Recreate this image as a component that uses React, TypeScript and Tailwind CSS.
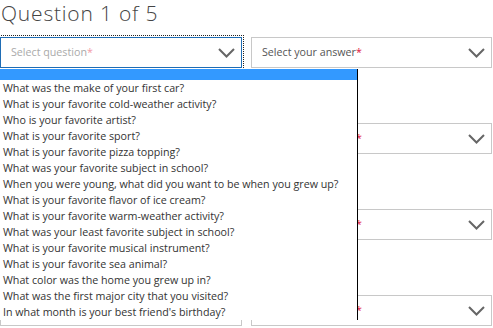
const questions = [
  "What was the make of your first car?",
  "What is your favorite cold-weather activity?",
  "Who is your favorite artist?",
  "What is your favorite sport?",
  "What is your favorite pizza topping?",
  "What was your favorite subject in school?",
  "When you were young, what did you want to be when you grew up?",
  "What is your favorite flavor of ice cream?",
  "What is your favorite warm-weather activity?",
  "What was your least favorite subject in school?",
  "What is your favorite musical instrument?",
  "What is your favorite sea animal?",
  "What color was the home you grew up in?",
  "What was the first major city that you visited?",
  "In what month is your best friend's birthday?",
];

function Chevron() {
  return (
    <svg
      className="absolute right-[6px] top-1/2 -translate-y-1/2"
      width="17"
      height="10"
      viewBox="0 0 17 10"
      fill="none"
    >
      <path d="M1 1 L8.5 8.5 L16 1" stroke="#666" strokeWidth="2" />
    </svg>
  );
}

function SelectBox({
  label,
  placeholder,
  focused,
}: {
  label: string;
  placeholder?: boolean;
  focused?: boolean;
}) {
  return (
    <div
      className={
        focused
          ? "relative flex h-[31px] items-center border border-[#1f6db5] pl-[10px] outline-1 outline-offset-[1px] outline-dotted outline-[#222]"
          : "relative flex h-[31px] items-center border border-[#c8c8c8] pl-[10px]"
      }
    >
      <span
        className={
          placeholder
            ? "text-[10.7px] text-[#aaa]"
            : "text-[10.7px] text-[#555]"
        }
      >
        {label}
        <span className={placeholder ? "text-[#f29aa6]" : "text-[#e0123d]"}>
          *
        </span>
      </span>
      <Chevron />
    </div>
  );
}

export default function App() {
  return (
    <div
      className="relative h-[328px] w-[493px] overflow-hidden bg-white"
      style={{ fontFamily: '"Open Sans", sans-serif' }}
    >
      {[1, 2, 3, 4].map((n) => (
        <div key={n} className="h-[86px]">
          <h2 className="h-[28px] pl-[1px] text-[21px] leading-[26px] font-light tracking-[0.8px] text-[#444]">
            Question {n} of 5
          </h2>
          <div className="mt-[9px] grid grid-cols-[242px_241px] gap-[9px]">
            <SelectBox label="Select question" placeholder focused={n === 1} />
            <SelectBox label="Select your answer" />
          </div>
        </div>
      ))}

      {/* open native-style option list */}
      <div className="absolute left-0 top-[69px] w-[358px] border-r border-black bg-white">
        <div className="h-[11px] bg-[#3399ff]" />
        {questions.map((q) => (
          <div
            key={q}
            className="h-[16px] pl-[3px] text-[10.7px] leading-[16px] text-[#333]"
          >
            {q}
          </div>
        ))}
      </div>
    </div>
  );
}
